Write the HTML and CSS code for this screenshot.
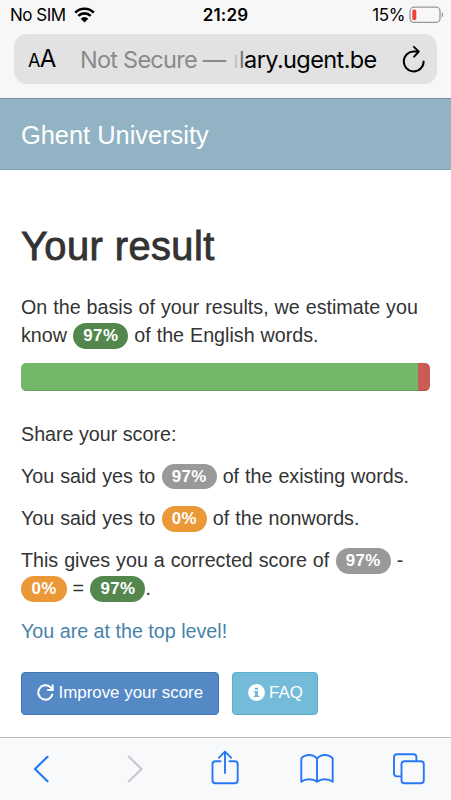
FILE: index.html
```
<!DOCTYPE html>
<html lang="en">
<head>
	<meta charset="UTF-8">
	<title>Your result</title>
	<link rel="stylesheet" href="styles.css">
</head>
<body>
	<div class="browser-top">
		<div class="status">
			<div class="status-left">
				<span class="carrier">No SIM</span>
				<svg class="wifi" width="21" height="16" viewBox="0 0 21 16">
					<path d="M1.2 5.6A13.2 13.2 0 0 1 19.8 5.6M4.3 8.9A8.8 8.8 0 0 1 16.7 8.9" fill="none" stroke="#000" stroke-width="2.7"/>
					<path d="M10.5 15.5L6.7 11.7A5.3 5.3 0 0 1 14.3 11.7Z" fill="#000"/>
				</svg>
			</div>
			<span class="clock">21:29</span>
			<div class="status-right">
				<span class="percent">15%</span>
				<svg width="35" height="18" viewBox="0 0 35 18">
					<rect x="1" y="1.2" width="30" height="15.2" rx="4" fill="none" stroke="#999" stroke-width="1.3"/>
					<rect x="3.3" y="3.5" width="4" height="10.6" rx="1.6" fill="#f04438"/>
					<path d="M32.7 6v5.6q1.5-.7 1.5-2.8t-1.5-2.8z" fill="#999"/>
				</svg>
			</div>
		</div>
		<div class="address">
			<span class="reader"><small>A</small>A</span>
			<div class="url"><span class="not-secure">Not Secure —</span><span class="fade">ı</span><span class="domain"><span class="half">l</span>ary.ugent.be</span></div>
			<svg class="reload" width="26" height="28" viewBox="0 0 26 28" fill="none" stroke="#000" stroke-width="2" stroke-linecap="round" stroke-linejoin="round">
				<path d="M17.5 6.6H13A9.9 9.9 0 1 0 22.6 16.5M12.9 1.9L17.8 6.6L13.1 11.6"/>
			</svg>
		</div>
	</div>

	<div class="navbar"><a class="brand">Ghent University</a></div>

	<div class="container">
		<h2>Your result</h2>
		<p class="estimate">On the basis of your results, we estimate you<br>know <span class="badge success">97%</span> of the English words.</p>
		<div class="progress">
			<div class="bar bar-success" style="width:97%"></div>
			<div class="bar bar-danger" style="width:3%"></div>
		</div>
		<p class="share">Share your score:</p>
		<p class="existing">You said yes to <span class="badge">97%</span> of the existing words.</p>
		<p class="nonwords">You said yes to <span class="badge warning">0%</span> of the nonwords.</p>
		<p class="corrected">This gives you a corrected score of <span class="badge">97%</span> -<br><span class="badge warning">0%</span> = <span class="badge success">97%</span>.</p>
		<p class="level"><a>You are at the top level!</a></p>
		<div class="buttons">
			<a class="btn btn-primary">
				<svg width="17" height="17" viewBox="0 0 17 17">
					<path d="M15.6 9.8A7.2 7.2 0 1 1 13.6 3.4L15.6 5.4M15.7 .4V5.9H10.2" fill="none" stroke="#fff" stroke-width="2"/>
				</svg>
				<span>Improve your score</span>
			</a>
			<a class="btn btn-info">
				<svg width="17" height="17" viewBox="0 0 17 17">
					<circle cx="8.5" cy="8.5" r="8.4" fill="#fff"/>
					<path d="M7 3.7h3v2H7zM5.7 7H10v4.7h1.3V13H5.7v-1.3H7V8.3H5.7z" fill="#6fb9d9"/>
				</svg>
				<span>FAQ</span>
			</a>
		</div>
	</div>

	<div class="toolbar">
		<svg viewBox="0 0 36 40"><path d="M24.5 7.8L12 20L24.5 32.2" stroke-width="2.2"/></svg>
		<svg class="off" viewBox="0 0 36 40"><path d="M14 7.8L26.5 20L14 32.2" stroke-width="2.2"/></svg>
		<svg viewBox="0 0 36 40"><path d="M13.5 12.3H8.5Q5.5 12.3 5.5 15.3V31.2Q5.5 34.2 8.5 34.2H27.7Q30.7 34.2 30.7 31.2V15.3Q30.7 12.3 27.7 12.3H22.5M18 24V3M12 8.7L18 2.6L24 8.7"/></svg>
		<svg viewBox="0 0 36 40"><path d="M18 9.5Q14.8 6 10.2 6Q5.2 6 2.3 9.3V32.8Q5.5 30.3 10.2 30.3Q15 30.3 18 32.8Q21 30.3 25.8 30.3Q30.5 30.3 33.7 32.8V9.3Q30.8 6 25.8 6Q21.2 6 18 9.5V32.8"/></svg>
		<svg viewBox="0 0 36 40"><path d="M9.5 27.4H6Q3 27.4 3 24.4V8.2Q3 5.2 6 5.2H22.4Q25.4 5.2 25.4 8.2V12"/><rect x="10.5" y="12.2" width="22.3" height="22" rx="3"/></svg>
	</div>
</body>
</html>
```
FILE: styles.css
```
*{
	box-sizing:border-box;
}
body{
	margin:0;
	height:800px;
	display:flex;
	flex-direction:column;
	overflow:hidden;
	background:#fff;
	color:#333;
	font:19.7px/28.2px "Liberation Sans",Arial,sans-serif;
}
svg{
	display:block;
	flex:none;
}
.browser-top{
	height:98px;
	flex:none;
	background:#f7f7f7;
	color:#000;
	font-family:Inter,sans-serif;
}
.status{
	height:34px;
	padding:0 7px 4px 10px;
	display:grid;
	grid-template-columns:1fr auto 1fr;
	align-items:center;
	font-size:17px;
	line-height:22px;
}
.status-left,.status-right{
	display:flex;
	align-items:center;
	gap:8px;
}
.carrier{
	letter-spacing:-.5px;
}
.status-right{
	justify-content:flex-end;
	gap:4px;
}
.percent{
	letter-spacing:-.4px;
}
.clock{
	margin-right:3px;
	font-weight:600;
	letter-spacing:.2px;
}
.address{
	height:50px;
	margin:0 14px;
	padding:0 10px 0 14px;
	display:flex;
	align-items:center;
	border-radius:13px;
	background:#e2e2e2;
}
.reader{
	width:52px;
	padding-top:2px;
	font-size:24px;
	letter-spacing:-.6px;
}
.reader small{
	font-size:18px;
}
.url{
	flex:1;
	padding-top:2px;
	display:flex;
	font-size:23.5px;
	letter-spacing:-.6px;
	white-space:nowrap;
}
.not-secure{
	width:153px;
	color:#8a8a8a;
	letter-spacing:-.75px;
}
.fade{
	width:6px;
	color:#c4c4c4;
}
.half{
	color:#777;
}
.navbar{
	height:72px;
	flex:none;
	padding:2px 21px 0;
	display:flex;
	align-items:center;
	border-top:1px solid #7997a6;
	border-bottom:1px solid #84a8b9;
	background:#91b3c4;
}
.brand{
	color:#fff;
	font-size:25.4px;
}
.container{
	flex:1;
	padding:53px 21px 0;
}
h2{
	height:46px;
	margin:0 0 24px;
	font-size:39.8px;
	line-height:46px;
	font-weight:400;
	letter-spacing:.45px;
	-webkit-text-stroke:.9px #333;
}
p{
	margin:0 0 14px;
	white-space:nowrap;
	word-spacing:.5px;
}
.badge{
	display:inline-block;
	margin:-4px 0 -4px .4px;
	padding:4px 10px;
	border-radius:14px;
	background:#999;
	color:#fff;
	font-size:16.9px;
	line-height:17.5px;
	font-weight:bold;
	letter-spacing:.4px;
	vertical-align:1px;
}
.success{
	background:#54874d;
}
.warning{
	background:#eb9937;
}
.progress{
	height:28px;
	margin-bottom:28.2px;
	display:flex;
	overflow:hidden;
	border-radius:5px;
}
.bar-success{
	background:#73b768;
	box-shadow:inset 0 -1px 0 #65a35c;
}
.bar-danger{
	background:#c95c54;
	box-shadow:inset 0 -1px 0 #b5524c;
}
.share,.level{
	word-spacing:0;
}
.level{
	color:#4683ab;
}
.buttons{
	margin-top:27px;
	display:flex;
	gap:13px;
}
.btn{
	height:43px;
	padding:0 14.5px 0 15px;
	display:flex;
	align-items:center;
	gap:4.5px;
	border:1px solid #3f76b5;
	border-radius:4px;
	background:#5489c6;
	color:#fff;
	font-size:16.9px;
	white-space:nowrap;
}
.btn svg{
	margin-bottom:2px;
}
.btn-info{
	padding-right:14px;
	border-color:#58afd0;
	background:#74bbda;
}
.toolbar{
	height:63px;
	flex:none;
	padding:0 24px 0 23px;
	display:flex;
	justify-content:space-between;
	align-items:flex-start;
	border-top:1px solid #bcbec1;
	background:#f8f9fb;
}
.toolbar svg{
	width:36px;
	height:40px;
	margin-top:11px;
	fill:none;
	stroke:#2878f6;
	stroke-width:1.9;
	stroke-linecap:round;
	stroke-linejoin:round;
}
.toolbar .off{
	stroke:#c7c9cc;
}
```
